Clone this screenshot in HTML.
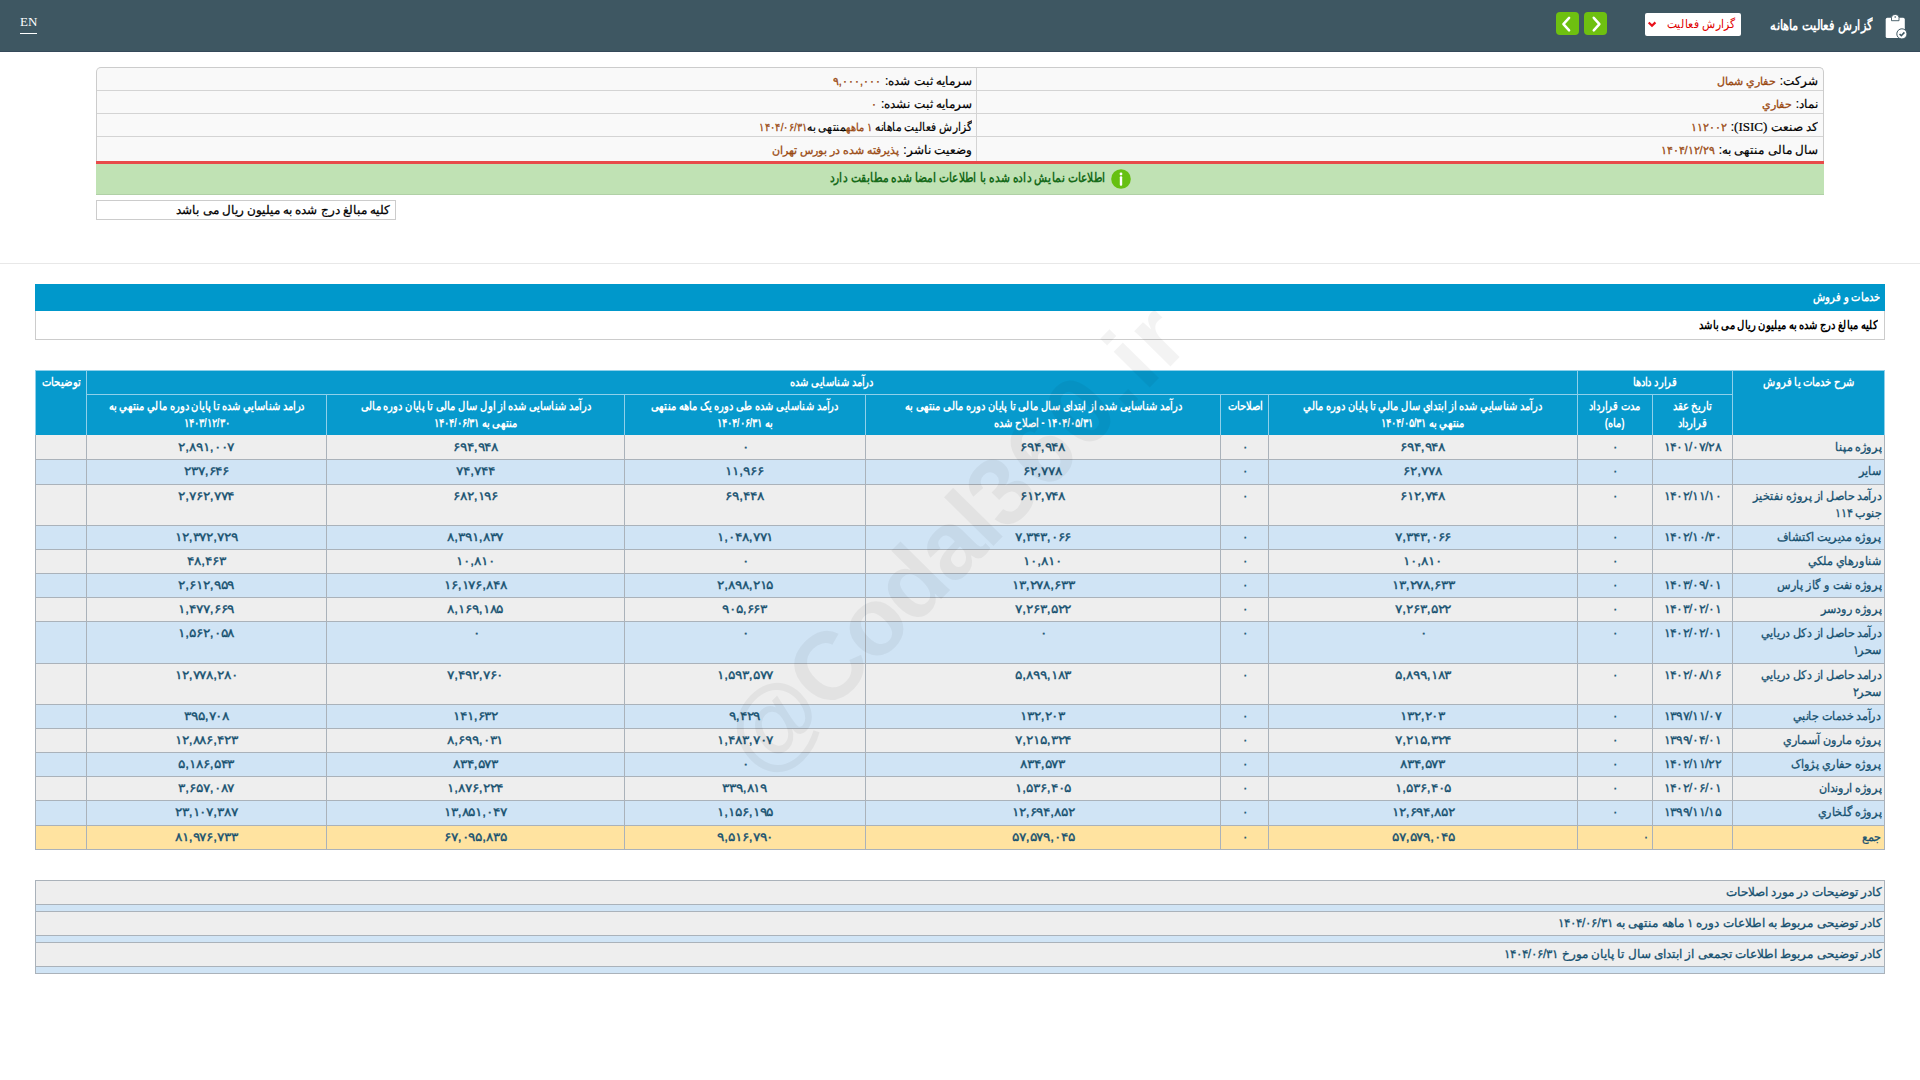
<!DOCTYPE html>
<html lang="fa" dir="rtl">
<head>
<meta charset="utf-8">
<title>گزارش فعالیت ماهانه</title>
<style>
html,body{margin:0;padding:0;}
body{width:1920px;height:1080px;overflow:hidden;background:#fff;position:relative;direction:rtl;
 font-family:"Liberation Sans",sans-serif;font-size:12px;color:#000;}
.abs{position:absolute;box-sizing:border-box;}
.bx{display:inline-block;transform:scaleX(.83);transform-origin:right center;white-space:nowrap;}
#top{left:0;top:0;width:1920px;height:52px;background:#3e5762;border-bottom:1px solid #35495a;}
#title{right:47px;top:13px;height:24px;line-height:24px;color:#fff;font-weight:bold;font-size:14px;white-space:nowrap;transform:scaleX(.816);transform-origin:right center;}
#sel{left:1645px;top:13px;width:96px;height:23px;background:#fff;border-radius:2px;color:#e00000;font-size:12px;line-height:23px;text-align:right;padding-right:6px;white-space:nowrap;overflow:hidden;}
.nb{top:12px;width:23px;height:23px;background:#6ec010;border-radius:4px;}
#en{left:20px;top:14px;color:#fff;font-family:"Liberation Serif",serif;font-size:13px;line-height:15px;border-bottom:1.5px solid #fff;padding-bottom:4px;direction:ltr;}
#info{left:96px;top:67px;width:1728px;height:95px;background:#f9f9f9;border:1px solid #ccc;border-bottom:none;border-radius:5px 5px 0 0;}
.ir{left:0;width:1726px;height:23px;border-bottom:1px solid #d4d4d4;}
.il{position:absolute;top:0;height:23px;line-height:26px;-webkit-text-stroke:.2px #000;white-space:nowrap;font-size:12px;color:#000;overflow:hidden;}
.il b{font-weight:normal;color:#9a4a12;-webkit-text-stroke:.3px #9a4a12;font-size:11px;margin-right:4px;}
.lat{font-family:"Liberation Serif",serif;font-size:13px;}
#red{left:96px;top:161px;width:1728px;height:3px;background:#e84a4a;}
#grn{left:96px;top:164px;width:1728px;height:31px;background:#c0e2b4;border-bottom:1px solid #b0d0a6;}
#grntxt{left:600px;top:167px;width:506px;height:22px;line-height:22px;text-align:right;color:#176b1a;font-weight:bold;font-size:13px;white-space:nowrap;}
#note{left:96px;top:200px;width:300px;height:20px;border:1px solid #ccc;background:#fff;line-height:19px;-webkit-text-stroke:.25px #000;padding-right:5px;font-size:11.5px;white-space:nowrap;overflow:hidden;}
#hr{left:0;top:263px;width:1920px;height:1px;background:#e8e8e8;}
#bar{left:35px;top:284px;width:1850px;height:27px;background:#0098cb;color:#fff;font-weight:bold;font-size:12px;line-height:27px;padding-right:5px;white-space:nowrap;}
#sub{left:35px;top:311px;width:1850px;height:29px;border:1px solid #ccc;border-top:none;background:#fff;font-weight:bold;font-size:12px;line-height:28px;padding-right:6px;white-space:nowrap;}
#hbg{left:35px;top:370px;width:1850px;height:65px;background:#8fd0ea;}
#bbg{left:35px;top:435px;width:1850px;height:415px;background:#aab2ba;}
.c{position:absolute;box-sizing:border-box;overflow:hidden;text-align:center;font-size:12px;line-height:17px;padding:3px 3px 0 3px;color:#15506f;-webkit-text-stroke:.3px #15506f;white-space:nowrap;display:flex;justify-content:center;align-items:flex-start;}
.c>span{flex:none;display:block;}
.c.n{text-align:right;justify-content:flex-start;}
.c.n>span{transform:scaleX(.93);transform-origin:right center;}
.c.d>span{transform:scaleX(1.15);transform-origin:center center;}
.c.dt>span{transform:scaleX(1.05);transform-origin:center center;}
.c.h{background:#079acd;color:#fff;font-weight:bold;padding-top:3px;-webkit-text-stroke:0;}
.c.h>span{transform:scaleX(.83);transform-origin:center center;}
.c.o{background:#eeeeee;}
.c.e{background:#d0e4f5;}
.c.s{background:#ffe3a0;}
#wm{left:554px;top:479px;width:800px;height:120px;line-height:120px;text-align:center;font-size:96px;font-weight:bold;color:rgba(0,0,0,0.047);transform:rotate(-45.4deg);direction:ltr;white-space:nowrap;pointer-events:none;}
.kb{left:35px;width:1850px;height:32px;border:1px solid #aab2ba;background:#d0e4f5;}
.kb div{height:23px;line-height:23px;background:#eeeeee;border-bottom:1px solid #aab2ba;text-align:right;padding-right:2px;color:#15506f;-webkit-text-stroke:.3px #15506f;font-size:12px;white-space:nowrap;overflow:hidden;}
</style>
</head>
<body>
<div id="top" class="abs"></div>
<div id="title" class="abs">گزارش فعالیت ماهانه</div>
<div id="sel" class="abs"><span class="bx" style="transform:scaleX(.9)">گزارش فعالیت</span></div>
<div class="abs nb" style="left:1556px"></div>
<div class="abs nb" style="left:1584px"></div>
<svg class="abs" style="left:1556px;top:12px" width="23" height="23" viewBox="0 0 23 23"><path d="M13.1 5.8 L7.4 12.05 L13.1 18.3" fill="none" stroke="#fff" stroke-width="2.5" stroke-linecap="round" stroke-linejoin="round"/></svg>
<svg class="abs" style="left:1584px;top:12px" width="23" height="23" viewBox="0 0 23 23"><path d="M9.75 5.8 L15.4 12.05 L9.75 18.3" fill="none" stroke="#fff" stroke-width="2.5" stroke-linecap="round" stroke-linejoin="round"/></svg>
<svg class="abs" style="left:1645px;top:13px" width="16" height="23" viewBox="0 0 16 23"><path d="M3.7 9.4 L7 12.8 L10.4 9.4" fill="none" stroke="#e8101a" stroke-width="2.2" stroke-linecap="butt" stroke-linejoin="miter"/></svg>
<svg class="abs" style="left:1880px;top:10px" width="32" height="32" viewBox="0 0 32 32"><rect x="5.7" y="7.8" width="19.1" height="20.2" rx="1.6" fill="#fff"/><path d="M11.5 10.7 V7.6 a3.75 3.2 0 0 1 7.5 0 V10.7 Z" fill="#fff" stroke="#3e5762" stroke-width="0.9"/><circle cx="15.2" cy="7" r="0.8" fill="#3e5762"/><circle cx="21.9" cy="23.9" r="5.1" fill="#fff" stroke="#3e5762" stroke-width="1"/><path d="M19.6 24 L21.3 25.7 L24.4 22.4" fill="none" stroke="#3e5762" stroke-width="1.6"/></svg>
<div id="en" class="abs">EN</div>

<div id="info" class="abs">
 <div class="abs ir" style="top:0"><span class="il" style="right:5px">شرکت:<b>حفاري شمال</b></span><span class="il" style="right:851px">سرمایه ثبت شده:<b>۹,۰۰۰,۰۰۰</b></span></div>
 <div class="abs ir" style="top:23px"><span class="il" style="right:5px">نماد:<b>حفاري</b></span><span class="il" style="right:851px">سرمایه ثبت نشده:<b>۰</b></span></div>
 <div class="abs ir" style="top:46px"><span class="il" style="right:5px">کد صنعت <span class="lat">(ISIC)</span>:<b>۱۱۲۰۰۲</b></span><span class="il" style="right:851px;transform:scaleX(.89);transform-origin:right center">گزارش فعالیت ماهانه<b>۱ ماهه</b>منتهی به<b style="margin:0">۱۴۰۴/۰۶/۳۱</b></span></div>
 <div class="abs ir" style="top:69px;border-bottom:none"><span class="il" style="right:5px">سال مالی منتهی به:<b>۱۴۰۴/۱۲/۲۹</b></span><span class="il" style="right:851px">وضعیت ناشر:<b>پذیرفته شده در بورس تهران</b></span></div>
</div>
<div class="abs" style="left:976px;top:68px;width:1px;height:93px;background:#d4d4d4"></div>
<div id="red" class="abs"></div>
<div id="grn" class="abs"></div>
<div id="grntxt" class="abs"><span class="bx" style="transform:scaleX(.82)">اطلاعات نمایش داده شده با اطلاعات امضا شده مطابقت دارد</span></div>
<svg class="abs" style="left:1110px;top:168px" width="22" height="22" viewBox="0 0 22 22"><circle cx="11" cy="11" r="9.8" fill="#66c011"/><circle cx="11" cy="6" r="1.4" fill="#fff"/><rect x="9.8" y="8.2" width="2.4" height="9.6" rx="1" fill="#fff"/></svg>
<div id="note" class="abs">کلیه مبالغ درج شده به میلیون ریال می باشد</div>
<div id="hr" class="abs"></div>
<div id="bar" class="abs"><span class="bx">خدمات و فروش</span></div>
<div id="sub" class="abs"><span class="bx">کلیه مبالغ درج شده به میلیون ریال می باشد</span></div>

<div id="hbg" class="abs"></div>
<div id="bbg" class="abs"></div>
<div class="c h" style="left:1733px;top:371px;width:151px;height:64px;"><span>شرح خدمات یا فروش</span></div>
<div class="c h" style="left:1578px;top:371px;width:154px;height:23px;"><span>قرارد دادها</span></div>
<div class="c h" style="left:87px;top:371px;width:1490px;height:23px;"><span>درآمد شناسایی شده</span></div>
<div class="c h" style="left:36px;top:371px;width:50px;height:64px;"><span>توضیحات</span></div>
<div class="c h h2" style="left:1653px;top:395px;width:79px;height:40px;"><span>تاریخ عقد<br>قرارداد</span></div>
<div class="c h h2" style="left:1578px;top:395px;width:74px;height:40px;"><span>مدت قرارداد<br>(ماه)</span></div>
<div class="c h h2" style="left:1269px;top:395px;width:308px;height:40px;"><span>درآمد شناسايي شده از ابتداي سال مالي تا پايان دوره مالي<br>منتهي به ۱۴۰۴/۰۵/۳۱</span></div>
<div class="c h h2" style="left:1221px;top:395px;width:47px;height:40px;"><span>اصلاحات</span></div>
<div class="c h h2" style="left:866px;top:395px;width:354px;height:40px;"><span>درآمد شناسایی شده از ابتدای سال مالی تا پایان دوره مالی منتهی به<br>۱۴۰۴/۰۵/۳۱ - اصلاح شده</span></div>
<div class="c h h2" style="left:625px;top:395px;width:240px;height:40px;"><span>درآمد شناسایی شده طی دوره یک ماهه منتهی<br>به ۱۴۰۴/۰۶/۳۱</span></div>
<div class="c h h2" style="left:327px;top:395px;width:297px;height:40px;"><span>درآمد شناسایی شده از اول سال مالی تا پایان دوره مالی<br>منتهی به ۱۴۰۴/۰۶/۳۱</span></div>
<div class="c h h2" style="left:87px;top:395px;width:239px;height:40px;"><span>درامد شناسايي شده تا پايان دوره مالي منتهي به<br>۱۴۰۳/۱۲/۳۰</span></div>
<div class="c o n" style="left:1733px;top:435px;width:151px;height:24px;padding-top:4px;"><span>پروژه مپنا</span></div>
<div class="c o dt" style="left:1653px;top:435px;width:79px;height:24px;padding-top:4px;"><span>۱۴۰۱/۰۷/۲۸</span></div>
<div class="c o" style="left:1578px;top:435px;width:74px;height:24px;padding-top:4px;"><span>۰</span></div>
<div class="c o d" style="left:1269px;top:435px;width:308px;height:24px;padding-top:4px;"><span>۶۹۴,۹۴۸</span></div>
<div class="c o" style="left:1221px;top:435px;width:47px;height:24px;padding-top:4px;"><span>۰</span></div>
<div class="c o d" style="left:866px;top:435px;width:354px;height:24px;padding-top:4px;"><span>۶۹۴,۹۴۸</span></div>
<div class="c o d" style="left:625px;top:435px;width:240px;height:24px;padding-top:4px;"><span>۰</span></div>
<div class="c o d" style="left:327px;top:435px;width:297px;height:24px;padding-top:4px;"><span>۶۹۴,۹۴۸</span></div>
<div class="c o d" style="left:87px;top:435px;width:239px;height:24px;padding-top:4px;"><span>۲,۸۹۱,۰۰۷</span></div>
<div class="c o" style="left:36px;top:435px;width:50px;height:24px;padding-top:4px;"><span></span></div>
<div class="c e n" style="left:1733px;top:460px;width:151px;height:24px;"><span>سایر</span></div>
<div class="c e dt" style="left:1653px;top:460px;width:79px;height:24px;"><span></span></div>
<div class="c e" style="left:1578px;top:460px;width:74px;height:24px;"><span>۰</span></div>
<div class="c e d" style="left:1269px;top:460px;width:308px;height:24px;"><span>۶۲,۷۷۸</span></div>
<div class="c e" style="left:1221px;top:460px;width:47px;height:24px;"><span>۰</span></div>
<div class="c e d" style="left:866px;top:460px;width:354px;height:24px;"><span>۶۲,۷۷۸</span></div>
<div class="c e d" style="left:625px;top:460px;width:240px;height:24px;"><span>۱۱,۹۶۶</span></div>
<div class="c e d" style="left:327px;top:460px;width:297px;height:24px;"><span>۷۴,۷۴۴</span></div>
<div class="c e d" style="left:87px;top:460px;width:239px;height:24px;"><span>۲۳۷,۶۴۶</span></div>
<div class="c e" style="left:36px;top:460px;width:50px;height:24px;"><span></span></div>
<div class="c o n" style="left:1733px;top:485px;width:151px;height:40px;"><span>درآمد حاصل از پروژه نفتخیز<br>جنوب ۱۱۴</span></div>
<div class="c o dt" style="left:1653px;top:485px;width:79px;height:40px;"><span>۱۴۰۲/۱۱/۱۰</span></div>
<div class="c o" style="left:1578px;top:485px;width:74px;height:40px;"><span>۰</span></div>
<div class="c o d" style="left:1269px;top:485px;width:308px;height:40px;"><span>۶۱۲,۷۴۸</span></div>
<div class="c o" style="left:1221px;top:485px;width:47px;height:40px;"><span>۰</span></div>
<div class="c o d" style="left:866px;top:485px;width:354px;height:40px;"><span>۶۱۲,۷۴۸</span></div>
<div class="c o d" style="left:625px;top:485px;width:240px;height:40px;"><span>۶۹,۴۴۸</span></div>
<div class="c o d" style="left:327px;top:485px;width:297px;height:40px;"><span>۶۸۲,۱۹۶</span></div>
<div class="c o d" style="left:87px;top:485px;width:239px;height:40px;"><span>۲,۷۶۲,۷۷۴</span></div>
<div class="c o" style="left:36px;top:485px;width:50px;height:40px;"><span></span></div>
<div class="c e n" style="left:1733px;top:526px;width:151px;height:23px;"><span>پروژه مدیریت اکتشاف</span></div>
<div class="c e dt" style="left:1653px;top:526px;width:79px;height:23px;"><span>۱۴۰۲/۱۰/۳۰</span></div>
<div class="c e" style="left:1578px;top:526px;width:74px;height:23px;"><span>۰</span></div>
<div class="c e d" style="left:1269px;top:526px;width:308px;height:23px;"><span>۷,۳۴۳,۰۶۶</span></div>
<div class="c e" style="left:1221px;top:526px;width:47px;height:23px;"><span>۰</span></div>
<div class="c e d" style="left:866px;top:526px;width:354px;height:23px;"><span>۷,۳۴۳,۰۶۶</span></div>
<div class="c e d" style="left:625px;top:526px;width:240px;height:23px;"><span>۱,۰۴۸,۷۷۱</span></div>
<div class="c e d" style="left:327px;top:526px;width:297px;height:23px;"><span>۸,۳۹۱,۸۳۷</span></div>
<div class="c e d" style="left:87px;top:526px;width:239px;height:23px;"><span>۱۲,۳۷۲,۷۲۹</span></div>
<div class="c e" style="left:36px;top:526px;width:50px;height:23px;"><span></span></div>
<div class="c o n" style="left:1733px;top:550px;width:151px;height:23px;"><span>شناورهاي ملکي</span></div>
<div class="c o dt" style="left:1653px;top:550px;width:79px;height:23px;"><span></span></div>
<div class="c o" style="left:1578px;top:550px;width:74px;height:23px;"><span>۰</span></div>
<div class="c o d" style="left:1269px;top:550px;width:308px;height:23px;"><span>۱۰,۸۱۰</span></div>
<div class="c o" style="left:1221px;top:550px;width:47px;height:23px;"><span>۰</span></div>
<div class="c o d" style="left:866px;top:550px;width:354px;height:23px;"><span>۱۰,۸۱۰</span></div>
<div class="c o d" style="left:625px;top:550px;width:240px;height:23px;"><span>۰</span></div>
<div class="c o d" style="left:327px;top:550px;width:297px;height:23px;"><span>۱۰,۸۱۰</span></div>
<div class="c o d" style="left:87px;top:550px;width:239px;height:23px;"><span>۴۸,۴۶۳</span></div>
<div class="c o" style="left:36px;top:550px;width:50px;height:23px;"><span></span></div>
<div class="c e n" style="left:1733px;top:574px;width:151px;height:23px;"><span>پروژه نفت و گاز پارس</span></div>
<div class="c e dt" style="left:1653px;top:574px;width:79px;height:23px;"><span>۱۴۰۳/۰۹/۰۱</span></div>
<div class="c e" style="left:1578px;top:574px;width:74px;height:23px;"><span>۰</span></div>
<div class="c e d" style="left:1269px;top:574px;width:308px;height:23px;"><span>۱۳,۲۷۸,۶۳۳</span></div>
<div class="c e" style="left:1221px;top:574px;width:47px;height:23px;"><span>۰</span></div>
<div class="c e d" style="left:866px;top:574px;width:354px;height:23px;"><span>۱۳,۲۷۸,۶۳۳</span></div>
<div class="c e d" style="left:625px;top:574px;width:240px;height:23px;"><span>۲,۸۹۸,۲۱۵</span></div>
<div class="c e d" style="left:327px;top:574px;width:297px;height:23px;"><span>۱۶,۱۷۶,۸۴۸</span></div>
<div class="c e d" style="left:87px;top:574px;width:239px;height:23px;"><span>۲,۶۱۲,۹۵۹</span></div>
<div class="c e" style="left:36px;top:574px;width:50px;height:23px;"><span></span></div>
<div class="c o n" style="left:1733px;top:598px;width:151px;height:23px;"><span>پروژه رودسر</span></div>
<div class="c o dt" style="left:1653px;top:598px;width:79px;height:23px;"><span>۱۴۰۳/۰۲/۰۱</span></div>
<div class="c o" style="left:1578px;top:598px;width:74px;height:23px;"><span>۰</span></div>
<div class="c o d" style="left:1269px;top:598px;width:308px;height:23px;"><span>۷,۲۶۳,۵۲۲</span></div>
<div class="c o" style="left:1221px;top:598px;width:47px;height:23px;"><span>۰</span></div>
<div class="c o d" style="left:866px;top:598px;width:354px;height:23px;"><span>۷,۲۶۳,۵۲۲</span></div>
<div class="c o d" style="left:625px;top:598px;width:240px;height:23px;"><span>۹۰۵,۶۶۳</span></div>
<div class="c o d" style="left:327px;top:598px;width:297px;height:23px;"><span>۸,۱۶۹,۱۸۵</span></div>
<div class="c o d" style="left:87px;top:598px;width:239px;height:23px;"><span>۱,۴۷۷,۶۶۹</span></div>
<div class="c o" style="left:36px;top:598px;width:50px;height:23px;"><span></span></div>
<div class="c e n" style="left:1733px;top:622px;width:151px;height:41px;"><span>درآمد حاصل از دکل دريايي<br>سحر۱</span></div>
<div class="c e dt" style="left:1653px;top:622px;width:79px;height:41px;"><span>۱۴۰۲/۰۲/۰۱</span></div>
<div class="c e" style="left:1578px;top:622px;width:74px;height:41px;"><span>۰</span></div>
<div class="c e d" style="left:1269px;top:622px;width:308px;height:41px;"><span>۰</span></div>
<div class="c e" style="left:1221px;top:622px;width:47px;height:41px;"><span>۰</span></div>
<div class="c e d" style="left:866px;top:622px;width:354px;height:41px;"><span>۰</span></div>
<div class="c e d" style="left:625px;top:622px;width:240px;height:41px;"><span>۰</span></div>
<div class="c e d" style="left:327px;top:622px;width:297px;height:41px;"><span>۰</span></div>
<div class="c e d" style="left:87px;top:622px;width:239px;height:41px;"><span>۱,۵۶۲,۰۵۸</span></div>
<div class="c e" style="left:36px;top:622px;width:50px;height:41px;"><span></span></div>
<div class="c o n" style="left:1733px;top:664px;width:151px;height:40px;"><span>درامد حاصل از دکل دريايي<br>سحر۲</span></div>
<div class="c o dt" style="left:1653px;top:664px;width:79px;height:40px;"><span>۱۴۰۲/۰۸/۱۶</span></div>
<div class="c o" style="left:1578px;top:664px;width:74px;height:40px;"><span>۰</span></div>
<div class="c o d" style="left:1269px;top:664px;width:308px;height:40px;"><span>۵,۸۹۹,۱۸۳</span></div>
<div class="c o" style="left:1221px;top:664px;width:47px;height:40px;"><span>۰</span></div>
<div class="c o d" style="left:866px;top:664px;width:354px;height:40px;"><span>۵,۸۹۹,۱۸۳</span></div>
<div class="c o d" style="left:625px;top:664px;width:240px;height:40px;"><span>۱,۵۹۳,۵۷۷</span></div>
<div class="c o d" style="left:327px;top:664px;width:297px;height:40px;"><span>۷,۴۹۲,۷۶۰</span></div>
<div class="c o d" style="left:87px;top:664px;width:239px;height:40px;"><span>۱۲,۷۷۸,۲۸۰</span></div>
<div class="c o" style="left:36px;top:664px;width:50px;height:40px;"><span></span></div>
<div class="c e n" style="left:1733px;top:705px;width:151px;height:23px;"><span>درآمد خدمات جانبي</span></div>
<div class="c e dt" style="left:1653px;top:705px;width:79px;height:23px;"><span>۱۳۹۷/۱۱/۰۷</span></div>
<div class="c e" style="left:1578px;top:705px;width:74px;height:23px;"><span>۰</span></div>
<div class="c e d" style="left:1269px;top:705px;width:308px;height:23px;"><span>۱۳۲,۲۰۳</span></div>
<div class="c e" style="left:1221px;top:705px;width:47px;height:23px;"><span>۰</span></div>
<div class="c e d" style="left:866px;top:705px;width:354px;height:23px;"><span>۱۳۲,۲۰۳</span></div>
<div class="c e d" style="left:625px;top:705px;width:240px;height:23px;"><span>۹,۴۲۹</span></div>
<div class="c e d" style="left:327px;top:705px;width:297px;height:23px;"><span>۱۴۱,۶۳۲</span></div>
<div class="c e d" style="left:87px;top:705px;width:239px;height:23px;"><span>۳۹۵,۷۰۸</span></div>
<div class="c e" style="left:36px;top:705px;width:50px;height:23px;"><span></span></div>
<div class="c o n" style="left:1733px;top:729px;width:151px;height:23px;"><span>پروژه مارون آسماري</span></div>
<div class="c o dt" style="left:1653px;top:729px;width:79px;height:23px;"><span>۱۳۹۹/۰۴/۰۱</span></div>
<div class="c o" style="left:1578px;top:729px;width:74px;height:23px;"><span>۰</span></div>
<div class="c o d" style="left:1269px;top:729px;width:308px;height:23px;"><span>۷,۲۱۵,۳۲۴</span></div>
<div class="c o" style="left:1221px;top:729px;width:47px;height:23px;"><span>۰</span></div>
<div class="c o d" style="left:866px;top:729px;width:354px;height:23px;"><span>۷,۲۱۵,۳۲۴</span></div>
<div class="c o d" style="left:625px;top:729px;width:240px;height:23px;"><span>۱,۴۸۳,۷۰۷</span></div>
<div class="c o d" style="left:327px;top:729px;width:297px;height:23px;"><span>۸,۶۹۹,۰۳۱</span></div>
<div class="c o d" style="left:87px;top:729px;width:239px;height:23px;"><span>۱۲,۸۸۶,۴۲۳</span></div>
<div class="c o" style="left:36px;top:729px;width:50px;height:23px;"><span></span></div>
<div class="c e n" style="left:1733px;top:753px;width:151px;height:23px;"><span>پروژه حفاري پژواک</span></div>
<div class="c e dt" style="left:1653px;top:753px;width:79px;height:23px;"><span>۱۴۰۲/۱۱/۲۲</span></div>
<div class="c e" style="left:1578px;top:753px;width:74px;height:23px;"><span>۰</span></div>
<div class="c e d" style="left:1269px;top:753px;width:308px;height:23px;"><span>۸۳۴,۵۷۳</span></div>
<div class="c e" style="left:1221px;top:753px;width:47px;height:23px;"><span>۰</span></div>
<div class="c e d" style="left:866px;top:753px;width:354px;height:23px;"><span>۸۳۴,۵۷۳</span></div>
<div class="c e d" style="left:625px;top:753px;width:240px;height:23px;"><span>۰</span></div>
<div class="c e d" style="left:327px;top:753px;width:297px;height:23px;"><span>۸۳۴,۵۷۳</span></div>
<div class="c e d" style="left:87px;top:753px;width:239px;height:23px;"><span>۵,۱۸۶,۵۴۳</span></div>
<div class="c e" style="left:36px;top:753px;width:50px;height:23px;"><span></span></div>
<div class="c o n" style="left:1733px;top:777px;width:151px;height:23px;"><span>پروژه اروندان</span></div>
<div class="c o dt" style="left:1653px;top:777px;width:79px;height:23px;"><span>۱۴۰۲/۰۶/۰۱</span></div>
<div class="c o" style="left:1578px;top:777px;width:74px;height:23px;"><span>۰</span></div>
<div class="c o d" style="left:1269px;top:777px;width:308px;height:23px;"><span>۱,۵۳۶,۴۰۵</span></div>
<div class="c o" style="left:1221px;top:777px;width:47px;height:23px;"><span>۰</span></div>
<div class="c o d" style="left:866px;top:777px;width:354px;height:23px;"><span>۱,۵۳۶,۴۰۵</span></div>
<div class="c o d" style="left:625px;top:777px;width:240px;height:23px;"><span>۳۳۹,۸۱۹</span></div>
<div class="c o d" style="left:327px;top:777px;width:297px;height:23px;"><span>۱,۸۷۶,۲۲۴</span></div>
<div class="c o d" style="left:87px;top:777px;width:239px;height:23px;"><span>۳,۶۵۷,۰۸۷</span></div>
<div class="c o" style="left:36px;top:777px;width:50px;height:23px;"><span></span></div>
<div class="c e n" style="left:1733px;top:801px;width:151px;height:24px;"><span>پروژه گلخاري</span></div>
<div class="c e dt" style="left:1653px;top:801px;width:79px;height:24px;"><span>۱۳۹۹/۱۱/۱۵</span></div>
<div class="c e" style="left:1578px;top:801px;width:74px;height:24px;"><span>۰</span></div>
<div class="c e d" style="left:1269px;top:801px;width:308px;height:24px;"><span>۱۲,۶۹۴,۸۵۲</span></div>
<div class="c e" style="left:1221px;top:801px;width:47px;height:24px;"><span>۰</span></div>
<div class="c e d" style="left:866px;top:801px;width:354px;height:24px;"><span>۱۲,۶۹۴,۸۵۲</span></div>
<div class="c e d" style="left:625px;top:801px;width:240px;height:24px;"><span>۱,۱۵۶,۱۹۵</span></div>
<div class="c e d" style="left:327px;top:801px;width:297px;height:24px;"><span>۱۳,۸۵۱,۰۴۷</span></div>
<div class="c e d" style="left:87px;top:801px;width:239px;height:24px;"><span>۲۳,۱۰۷,۳۸۷</span></div>
<div class="c e" style="left:36px;top:801px;width:50px;height:24px;"><span></span></div>
<div class="c s n" style="left:1733px;top:826px;width:151px;height:23px;"><span>جمع</span></div>
<div class="c s dt" style="left:1653px;top:826px;width:79px;height:23px;"><span></span></div>
<div class="c s n" style="left:1578px;top:826px;width:74px;height:23px;"><span>۰</span></div>
<div class="c s d" style="left:1269px;top:826px;width:308px;height:23px;"><span>۵۷,۵۷۹,۰۴۵</span></div>
<div class="c s" style="left:1221px;top:826px;width:47px;height:23px;"><span>۰</span></div>
<div class="c s d" style="left:866px;top:826px;width:354px;height:23px;"><span>۵۷,۵۷۹,۰۴۵</span></div>
<div class="c s d" style="left:625px;top:826px;width:240px;height:23px;"><span>۹,۵۱۶,۷۹۰</span></div>
<div class="c s d" style="left:327px;top:826px;width:297px;height:23px;"><span>۶۷,۰۹۵,۸۳۵</span></div>
<div class="c s d" style="left:87px;top:826px;width:239px;height:23px;"><span>۸۱,۹۷۶,۷۳۳</span></div>
<div class="c s" style="left:36px;top:826px;width:50px;height:23px;"><span></span></div>

<div class="abs kb" style="top:880px"><div>کادر توضیحات در مورد اصلاحات</div></div>
<div class="abs kb" style="top:911px"><div>کادر توضیحی مربوط به اطلاعات دوره ۱ ماهه منتهی به ۱۴۰۴/۰۶/۳۱</div></div>
<div class="abs kb" style="top:942px"><div>کادر توضیحی مربوط اطلاعات تجمعی از ابتدای سال تا پایان مورخ ۱۴۰۴/۰۶/۳۱</div></div>
<div id="wm" class="abs"><span style="letter-spacing:-2.4px">@Codal</span><span style="letter-spacing:2.9px">360.i</span>r</div>
</body>
</html>
